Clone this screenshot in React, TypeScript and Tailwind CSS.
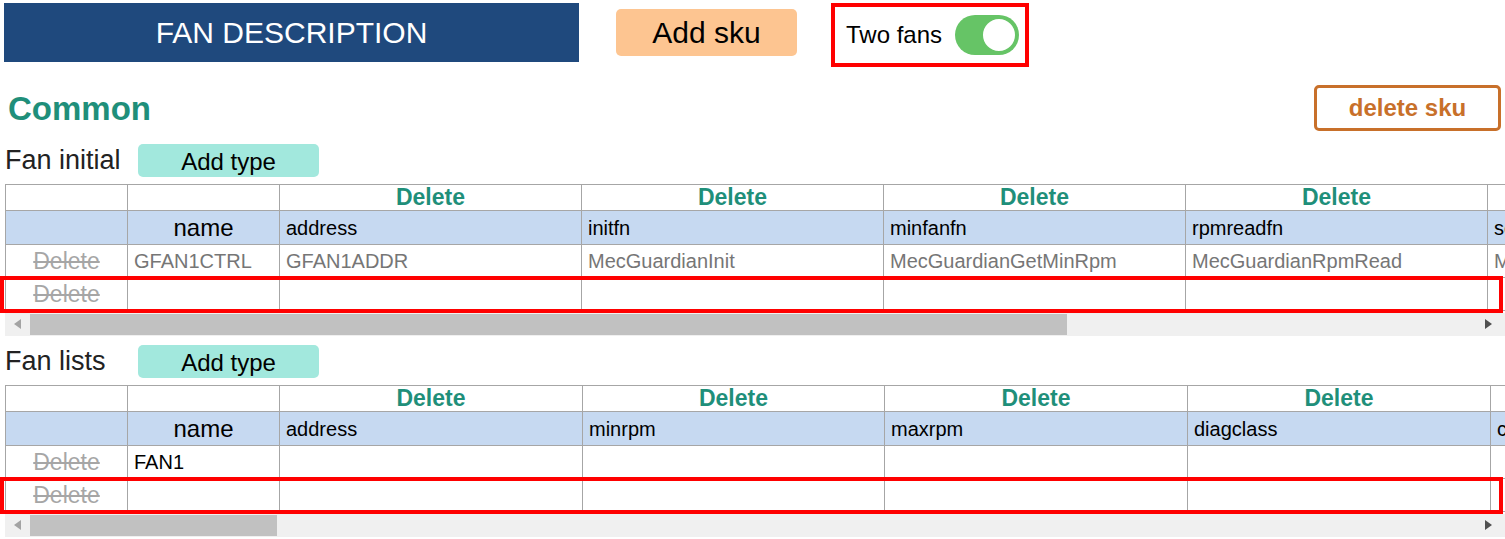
import { useState } from 'react'

type Table = {
  cols: string[]
  rows: string[][]
  dim: boolean
  widths: number[]
  thumb: [number, number]
}

const INITIAL: Table = {
  cols: ['address', 'initfn', 'minfanfn', 'rpmreadfn', 'setspeedfn'],
  rows: [
    ['GFAN1CTRL', 'GFAN1ADDR', 'MecGuardianInit', 'MecGuardianGetMinRpm', 'MecGuardianRpmRead', 'MecGuardianSetSpeed'],
    ['', '', '', '', '', ''],
  ],
  dim: true,
  widths: [122, 152, 302, 302, 302, 302, 302],
  thumb: [30, 1067],
}

const LISTS: Table = {
  cols: ['address', 'minrpm', 'maxrpm', 'diagclass', 'config'],
  rows: [
    ['FAN1', '', '', '', '', ''],
    ['', '', '', '', '', ''],
  ],
  dim: false,
  widths: [122, 152, 303, 302, 303, 303, 303],
  thumb: [30, 277],
}

function Toggle({ on, onChange }: { on: boolean; onChange: () => void }) {
  return (
    <button
      onClick={onChange}
      className={`relative w-[64px] h-[40px] rounded-full transition-colors ${on ? 'bg-[#66c466]' : 'bg-[#d0d0d0]'}`}
    >
      <span
        className={`absolute top-[2px] w-[36px] h-[36px] rounded-full bg-white border-2 border-[#66c466] transition-all ${on ? 'left-[26px]' : 'left-[2px]'}`}
      />
    </button>
  )
}

function FanTable({ title, data }: { title: string; data: Table }) {
  const total = data.widths.reduce((a, b) => a + b, 0)
  return (
    <section>
      <div className="flex items-center h-[34px] pl-[5px]">
        <span className="text-[27px] text-[#222] w-[133px]">{title}</span>
        <button className="w-[181px] h-[33px] rounded-[5px] bg-[#a2e8dd] text-[24px] text-black">Add type</button>
      </div>

      <div className="relative mt-[7px] ml-[5px]">
        <div className="w-[1500px] overflow-hidden">
          <table className="border-collapse table-fixed" style={{ width: total }}>
            <colgroup>
              {data.widths.map((w, i) => (
                <col key={i} style={{ width: w }} />
              ))}
            </colgroup>
            <tbody>
              {/* delete-column row */}
              <tr className="h-[26px]">
                <td className="border border-[#a6a6a6]" />
                <td className="border border-[#a6a6a6]" />
                {data.cols.map((c) => (
                  <td key={c} className="border border-[#a6a6a6] text-center text-[23px] leading-none font-bold text-[#1f8f7a]">
                    Delete
                  </td>
                ))}
              </tr>
              {/* header row */}
              <tr className="h-[34px] bg-[#c6d9f1]">
                <td className="border border-[#a6a6a6]" />
                <td className="border border-[#a6a6a6] text-center text-[24px] leading-none">name</td>
                {data.cols.map((c) => (
                  <td key={c} className="border border-[#a6a6a6] px-[6px] text-[20px] leading-none whitespace-nowrap">
                    {c}
                  </td>
                ))}
              </tr>
              {data.rows.map((r, ri) => (
                <tr key={ri} className="h-[33px]">
                  <td className="border border-[#a6a6a6] text-center text-[23px] leading-none text-[#a6a6a6] line-through">Delete</td>
                  {r.map((v, ci) => (
                    <td
                      key={ci}
                      className={`border border-[#a6a6a6] px-[6px] text-[20px] leading-none whitespace-nowrap overflow-hidden ${data.dim ? 'text-[#767676]' : 'text-black'}`}
                    >
                      {v}
                    </td>
                  ))}
                </tr>
              ))}
            </tbody>
          </table>
        </div>

        {/* scrollbar */}
        <div className="relative h-[23px] w-[1500px] bg-[#f0f0f0] mt-[2px]">
          <div
            className="absolute top-[1px] bottom-[1px] bg-[#c1c1c1]"
            style={{ left: data.thumb[0] - 5, width: data.thumb[1] - data.thumb[0] }}
          />
          <span className="absolute left-[9px] top-[6px] w-0 h-0 border-y-[5px] border-y-transparent border-r-[7px] border-r-[#a3a3a3]" />
          <span className="absolute left-[1480px] top-[6px] w-0 h-0 border-y-[5px] border-y-transparent border-l-[7px] border-l-[#505050]" />
        </div>

        {/* highlight on the empty row */}
        <div className="absolute left-[-5px] top-[92px] w-[1503px] h-[37px] border-[4px] border-[#ff0000] pointer-events-none" />
      </div>
    </section>
  )
}

export default function App() {
  const [twoFans, setTwoFans] = useState(true)

  return (
    <div className="w-[1505px] h-[539px] overflow-hidden bg-white font-['Liberation_Sans',Arial,sans-serif] text-black">
      <div className="flex items-start pt-[3px] pl-[4px]">
        <div className="w-[575px] h-[59px] bg-[#1f497d] flex items-center justify-center text-white text-[30px]">
          FAN DESCRIPTION
        </div>
        <button className="ml-[37px] mt-[6px] w-[181px] h-[47px] rounded-[5px] bg-[#fdc591] text-[30px]">Add sku</button>
        <div className="ml-[34px] w-[198px] h-[64px] border-[4px] border-[#ff0000] flex items-center pl-[11px] pr-[6px] justify-between">
          <span className="text-[24px]">Two fans</span>
          <Toggle on={twoFans} onChange={() => setTwoFans(!twoFans)} />
        </div>
      </div>

      <div className="flex items-center justify-between h-[46px] mt-[18px] pl-[8px] pr-[4px]">
        <h2 className="text-[33px] font-bold text-[#1f8f7a] leading-none">Common</h2>
        <button className="w-[187px] h-[46px] rounded-[5px] border-[3px] border-[#c8702a] text-[#c8702a] text-[24px] font-bold">
          delete sku
        </button>
      </div>

      <div className="mt-[12px]">
        <FanTable title="Fan initial" data={INITIAL} />
      </div>
      <div className="mt-[8px]">
        <FanTable title="Fan lists" data={LISTS} />
      </div>
    </div>
  )
}
